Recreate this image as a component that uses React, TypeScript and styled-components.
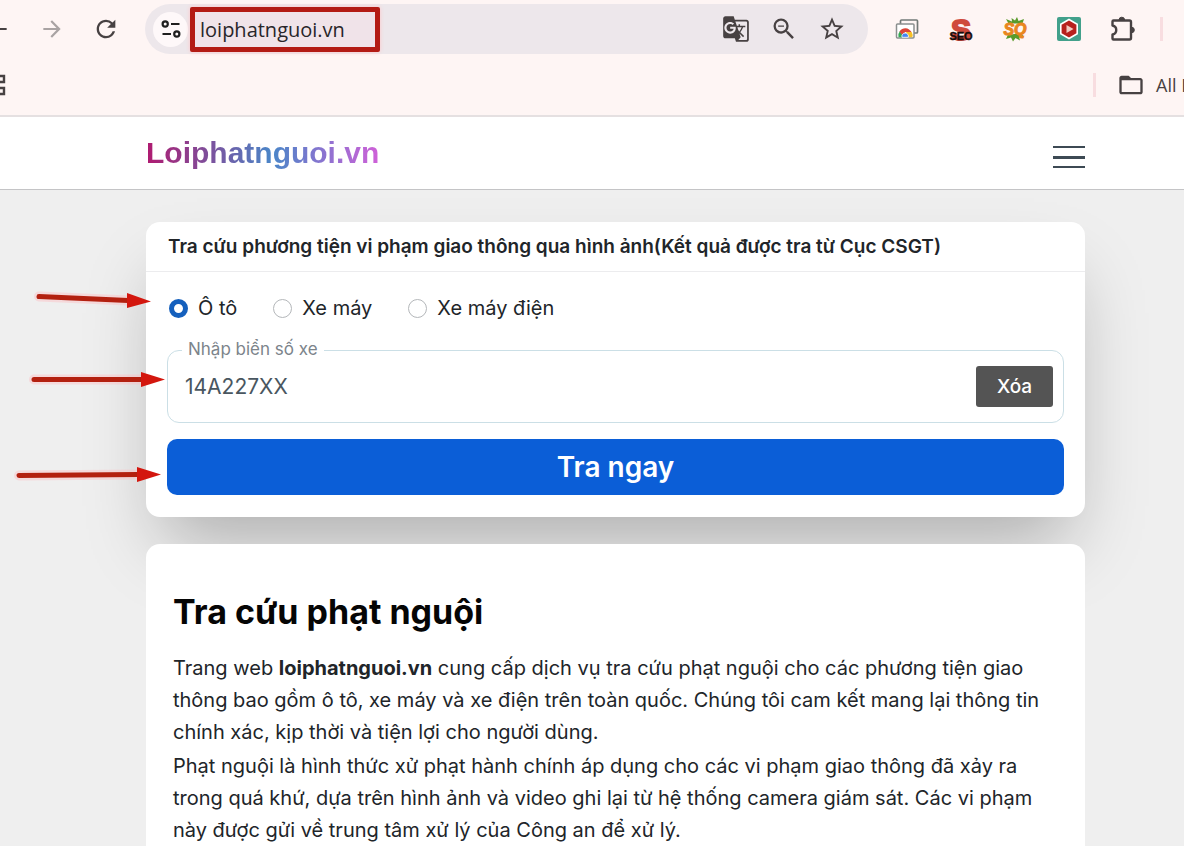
import React, { useState } from "react";
import styled, { createGlobalStyle } from "styled-components";
import {
  MdArrowBack,
  MdArrowForward,
  MdFolderOpen,
  MdGTranslate,
  MdRefresh,
  MdStarBorder,
  MdZoomOut,
} from "react-icons/md";

const GlobalStyle = createGlobalStyle`
  *, *::before, *::after { box-sizing: border-box; }
  body {
    margin: 0;
    overflow-x: hidden;
    background: #efefef;
    color: #212529;
    font-family: Inter, "Liberation Sans", sans-serif;
    font-size: 20px;
  }
  button, input { font: inherit; }
`;

const Page = styled.div`
  position: relative;
  display: flex;
  flex-direction: column;
  min-height: 100vh;
  overflow: hidden;
`;

const BrowserBar = styled.header`
  background: #fef5f4;
  border-bottom: 2px solid #e5e0e1;
  font-family: "Open Sans", "Noto Sans", sans-serif;
  color: #1f1f1f;
`;

const ToolbarRow = styled.div`
  display: flex;
  align-items: center;
  height: 58px;
  margin-left: -29px;
`;

const IconButton = styled.button<{ $width?: number; $faded?: boolean }>`
  display: flex;
  flex: none;
  align-items: center;
  justify-content: center;
  width: ${({ $width }) => $width ?? 54}px;
  height: 48px;
  padding: 0;
  border: 0;
  background: none;
  color: ${({ $faded }) => ($faded ? "#a9a3a3" : "#474142")};
`;

const AddressBar = styled.div`
  display: flex;
  flex: 1;
  align-items: center;
  height: 50px;
  margin: 0 12px;
  padding: 0 12px 0 8px;
  border-radius: 25px;
  background: #ede7eb;
`;

const SiteInfo = styled.button`
  display: flex;
  align-items: center;
  justify-content: center;
  width: 35px;
  height: 35px;
  padding: 0;
  border: 0;
  border-radius: 50%;
  background: #fef8f9;
  color: #1f1f1f;
`;

const UrlHighlight = styled.div`
  width: 190px;
  height: 45px;
  margin: 0 auto 0 2px;
  border: 5px solid #b31b14;
  border-radius: 2px;
  background: #f0e3e9;
  box-shadow: 0 0 4px #ffc4c8;
`;

const UrlInput = styled.input`
  display: block;
  width: 100%;
  height: 35px;
  padding: 0 5px;
  border: 0;
  background: none;
  color: #28262a;
  font-size: 20px;
  outline: 0;
`;

const Divider = styled.span`
  flex: none;
  width: 3px;
  height: 24px;
  margin: 0 21px 0 10px;
  background: #f8dde0;
`;

const BookmarkRow = styled.div`
  display: flex;
  align-items: center;
  justify-content: space-between;
  height: 57px;
  padding-bottom: 4px;
`;

const AppsButton = styled(IconButton)`
  margin-left: -18px;
`;

const BookmarkGroup = styled.div`
  display: flex;
  align-items: center;
  width: 101px;
  overflow: hidden;
`;

const BookmarkButton = styled.button`
  display: flex;
  flex: none;
  align-items: center;
  gap: 11px;
  padding: 0;
  border: 0;
  background: none;
  color: #474142;
  font-size: 18px;
  white-space: nowrap;
`;

const SiteHeader = styled.div`
  display: flex;
  align-items: center;
  justify-content: space-between;
  height: 73px;
  padding: 0 99px 0 146px;
  border-bottom: 1px solid #c4c4c6;
  background: #fff;
`;

const Brand = styled.a`
  background: linear-gradient(90deg, #b01a70 0%, #4a86c8 54%, #cf60d8 100%);
  background-clip: text;
  color: transparent;
  font-family: "Liberation Sans", Arial, sans-serif;
  font-size: 30px;
  font-weight: 700;
  line-height: 36px;
  text-decoration: none;
`;

const MenuButton = styled.button`
  display: flex;
  flex-direction: column;
  justify-content: space-between;
  width: 32px;
  height: 22px;
  margin-top: 8px;
  padding: 0;
  border: 0;
  background: none;
`;

const MenuLine = styled.span<{ $thick?: boolean }>`
  width: 100%;
  height: ${({ $thick }) => ($thick ? 3 : 2)}px;
  background: #3d4a54;
`;

const Content = styled.main`
  display: flex;
  flex: 1;
  flex-direction: column;
  gap: 27px;
  padding: 32px 99px 0 146px;
`;

const SearchCard = styled.section`
  border-radius: 14px;
  background: #fff;
  box-shadow: 0 40px 70px -16px rgba(0, 0, 0, 0.28);
`;

const CardTitle = styled.h2`
  margin: 0;
  padding: 11px 22px 10px;
  border-bottom: 1px solid #ececee;
  font-size: 19px;
  font-weight: 600;
  line-height: 28px;
`;

const SearchForm = styled.form`
  display: flex;
  flex-direction: column;
  padding: 20px 21px 22px;
`;

const RadioRow = styled.div`
  display: flex;
  gap: 34px;
  height: 32px;
  margin-bottom: 26px;
`;

const RadioLabel = styled.label`
  display: flex;
  align-items: center;
  gap: 10px;
`;

const Radio = styled.input`
  appearance: none;
  width: 19px;
  height: 19px;
  margin: 0 0 0 2px;
  border: 1px solid #b4b7ba;
  border-radius: 50%;
  background: #fff;

  &:checked {
    border: 5px solid #1560bd;
  }
`;

const Field = styled.div`
  position: relative;
  display: flex;
  align-items: center;
  height: 73px;
  margin-bottom: 16px;
  padding: 0 10px 0 17px;
  border: 1px solid #cbdfe6;
  border-radius: 12px;
`;

const FieldLabel = styled.label`
  position: absolute;
  top: -13px;
  left: 14px;
  padding: 0 6px;
  background: #fff;
  color: #7c848b;
  font-size: 17px;
  line-height: 22px;
`;

const PlateInput = styled.input`
  flex: 1;
  min-width: 0;
  padding: 0;
  border: 0;
  background: none;
  color: #495660;
  font-size: 21px;
  outline: 0;
`;

const ClearButton = styled.button`
  width: 77px;
  height: 41px;
  padding: 0;
  border: 0;
  border-radius: 3px;
  background: #545454;
  color: #fff;
  font-size: 19px;
  font-weight: 500;
`;

const SubmitButton = styled.button`
  height: 56px;
  border: 0;
  border-radius: 10px;
  background: #0b5ed7;
  color: #fff;
  font-size: 28px;
  font-weight: 600;
`;

const Article = styled.article`
  position: relative;
  flex: 1;
  padding: 46px 27px 0;
  border-radius: 14px 14px 0 0;
  background: #fff;
`;

const ArticleTitle = styled.h1`
  margin: 0 0 18px;
  color: #050505;
  font-size: 34px;
  font-weight: 700;
  line-height: 44px;
`;

const Paragraph = styled.p`
  margin: 0 0 2px;
  line-height: 32px;
`;

const Arrows = styled.svg`
  position: absolute;
  top: 280px;
  left: 0;
  pointer-events: none;
`;

const TuneIcon = () => (
  <svg width="20" height="20" viewBox="0 0 20 20" fill="none" stroke="currentColor" strokeWidth="2.2" aria-hidden="true">
    <circle cx="4.2" cy="5" r="2.6" />
    <path d="M10 5h8.5M1.5 15H10" />
    <circle cx="15.8" cy="15" r="2.6" />
  </svg>
);

const AppsIcon = () => (
  <svg width="22" height="22" viewBox="0 0 22 22" fill="none" stroke="currentColor" strokeWidth="2.4" aria-hidden="true">
    <path d="M2 2h6v6H2zM14 2h6v6h-6zM2 14h6v6H2zM14 14h6v6h-6z" />
  </svg>
);

const GalleryIcon = () => (
  <svg width="24" height="24" viewBox="0 0 24 24" aria-hidden="true">
    <path d="M5.500 7V4Q5.500 3 6.500 3H21.500Q22.500 3 22.500 4V15Q22.500 16 21.500 16H19" fill="none" stroke="#727a77" strokeWidth="1.7" />
    <rect x="1.500" y="7" width="17.500" height="14" rx="1" fill="#fff" stroke="#8b8f8e" strokeWidth="1.500" />
    <path d="M3.500 20.300a7 7 0 0 1 1.500-6.300l4 6.300z" fill="#34a853" />
    <path d="M4.500 14.500a7 7 0 0 1 12 0.500H10.500L7.300 18.200z" fill="#dc4437" />
    <path d="M11 15h5.700a7 7 0 0 1 .6 5.300h-4.500z" fill="#f6c026" />
    <path d="M7 20.300a3.300 3.300 0 1 1 6.300 0z" fill="#4285f4" stroke="#fff" strokeWidth="0.800" />
  </svg>
);

const SeoIcon = () => (
  <svg width="30" height="30" viewBox="0 0 30 30" aria-hidden="true">
    <text x="15" y="26" textAnchor="middle" fill="#cf4a3c" stroke="#cf4a3c" strokeWidth="2" fontFamily="Liberation Sans" fontSize="30" fontWeight="700">S</text>
    <text x="15" y="26" textAnchor="middle" fill="#150c0c" stroke="#150c0c" strokeWidth="0.400" fontFamily="Liberation Sans" fontSize="11" fontWeight="700">SEO</text>
  </svg>
);

const SeoQuakeIcon = () => (
  <svg width="26" height="26" viewBox="0 0 26 26" aria-hidden="true">
    <path d="M4 3l6 2.500L9.500 2 13 4.500 15 1l1.500 4L22 3l-1.500 4.500H6.500zM6 18.500L4 23l5-1.500 2 4 2.500-3.500 4.500 2.500-1-4 5 0-3-3z" fill="#5a9b2c" />
    <text x="13" y="19" textAnchor="middle" fill="#e98620" stroke="#e98620" strokeWidth="1" fontFamily="Liberation Sans" fontSize="16" fontStyle="italic" fontWeight="700">SQ</text>
  </svg>
);

const HexPlayIcon = () => (
  <svg width="26" height="26" viewBox="0 0 26 26" aria-hidden="true">
    <rect x="1" y="1" width="24" height="24" rx="2" fill="#42a08b" />
    <path d="M13 3.500l8.200 4.700v9.600L13 22.500l-8.200-4.700V8.200z" fill="#b7201d" stroke="#fff" strokeWidth="1.600" />
    <path d="M10.500 9l7 4-7 4z" fill="#f3c9c0" />
  </svg>
);

const PuzzleIcon = () => (
  <svg width="26" height="28" viewBox="0 0 26 28" aria-hidden="true">
    <path d="M3.500 5.500H19.500Q21 5.500 21 7V23Q21 24.500 19.500 24.500H3.500Q2.500 24.500 2.500 23.500V19.500C7.500 18.500 7.500 11.500 2.500 10.500V6.500Q2.500 5.500 3.500 5.500Z" fill="none" stroke="#474142" strokeWidth="2.400" strokeLinejoin="round" />
    <path d="M9 5a2.800 2.800 0 0 1 5.600 0zM21.500 12.200a2.800 2.800 0 0 1 0 5.600z" fill="#474142" stroke="#474142" />
  </svg>
);

const extensions = [
  { name: "Web store", icon: <GalleryIcon /> },
  { name: "SEO", icon: <SeoIcon /> },
  { name: "SQ", icon: <SeoQuakeIcon /> },
  { name: "Player", icon: <HexPlayIcon /> },
  { name: "Extensions", icon: <PuzzleIcon /> },
];

const vehicles = ["Ô tô", "Xe máy", "Xe máy điện"];

const arrowShafts = "M39 296.500L128 300.500M34 379.500H142M19 475.500L138 474.500";

export default function App() {
  const [vehicle, setVehicle] = useState(vehicles[0]);
  const [plate, setPlate] = useState("14A227XX");

  return (
    <Page>
      <GlobalStyle />
      <BrowserBar>
        <ToolbarRow>
          <IconButton aria-label="Back"><MdArrowBack size={26} /></IconButton>
          <IconButton aria-label="Forward" $faded><MdArrowForward size={26} /></IconButton>
          <IconButton aria-label="Reload"><MdRefresh size={28} /></IconButton>
          <AddressBar>
            <SiteInfo aria-label="Site information"><TuneIcon /></SiteInfo>
            <UrlHighlight>
              <UrlInput aria-label="Address" defaultValue="loiphatnguoi.vn" />
            </UrlHighlight>
            <IconButton $width={48} aria-label="Translate"><MdGTranslate size={28} /></IconButton>
            <IconButton $width={48} aria-label="Zoom out"><MdZoomOut size={28} /></IconButton>
            <IconButton $width={48} aria-label="Bookmark"><MdStarBorder size={28} /></IconButton>
          </AddressBar>
          {extensions.map(({ name, icon }) => (
            <IconButton key={name} aria-label={name}>{icon}</IconButton>
          ))}
          <Divider />
        </ToolbarRow>
        <BookmarkRow>
          <AppsButton $width={26} aria-label="Apps"><AppsIcon /></AppsButton>
          <BookmarkGroup>
            <Divider />
            <BookmarkButton><MdFolderOpen size={28} />All Bookmarks</BookmarkButton>
          </BookmarkGroup>
        </BookmarkRow>
      </BrowserBar>

      <SiteHeader>
        <Brand href="#">Loiphatnguoi.vn</Brand>
        <MenuButton aria-label="Menu">
          <MenuLine />
          <MenuLine $thick />
          <MenuLine />
        </MenuButton>
      </SiteHeader>

      <Content>
        <SearchCard>
          <CardTitle>Tra cứu phương tiện vi phạm giao thông qua hình ảnh(Kết quả được tra từ Cục CSGT)</CardTitle>
          <SearchForm onSubmit={(event) => event.preventDefault()}>
            <RadioRow>
              {vehicles.map((name) => (
                <RadioLabel key={name}>
                  <Radio type="radio" name="vehicle" checked={vehicle === name} onChange={() => setVehicle(name)} />
                  {name}
                </RadioLabel>
              ))}
            </RadioRow>
            <Field>
              <FieldLabel htmlFor="plate">Nhập biển số xe</FieldLabel>
              <PlateInput id="plate" value={plate} onChange={(event) => setPlate(event.target.value)} />
              <ClearButton type="button" onClick={() => setPlate("")}>Xóa</ClearButton>
            </Field>
            <SubmitButton type="submit">Tra ngay</SubmitButton>
          </SearchForm>
        </SearchCard>

        <Article>
          <ArticleTitle>Tra cứu phạt nguội</ArticleTitle>
          <Paragraph>
            Trang web <strong>loiphatnguoi.vn</strong> cung cấp dịch vụ tra cứu phạt nguội cho các phương tiện giao
            thông bao gồm ô tô, xe máy và xe điện trên toàn quốc. Chúng tôi cam kết mang lại thông tin
            chính xác, kịp thời và tiện lợi cho người dùng.
          </Paragraph>
          <Paragraph>
            Phạt nguội là hình thức xử phạt hành chính áp dụng cho các vi phạm giao thông đã xảy ra
            trong quá khứ, dựa trên hình ảnh và video ghi lại từ hệ thống camera giám sát. Các vi phạm
            này được gửi về trung tâm xử lý của Công an để xử lý.
          </Paragraph>
        </Article>
      </Content>

      <Arrows width="170" height="215" viewBox="0 280 170 215" aria-hidden="true">
        <path d={arrowShafts} stroke="#ffb9bf" strokeOpacity="0.4" strokeWidth="10" strokeLinecap="round" />
        <path d={arrowShafts} stroke="#b3200f" strokeWidth="5" strokeLinecap="round" />
        <path d="M127 293L151 301.500 127 308zM141 372L165 379.500 141 387zM137 467L161 474.500 137 482z" fill="#d3170e" />
      </Arrows>
    </Page>
  );
}
